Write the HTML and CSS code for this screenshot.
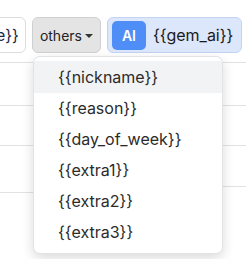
FILE: index.html
```html
<!DOCTYPE html>
<html lang="en">
<head>
    <meta charset="UTF-8">
    <meta name="viewport" content="width=device-width, initial-scale=1.0">
    <title>Variables</title>
    <link rel="stylesheet" href="styles.css">
</head>
<body>
    <div class="editor">
        <div class="toolbar">
            <button class="var-btn">{{name}}</button>
            <button class="others-btn">others <span class="caret"></span></button>
            <button class="ai-btn"><span class="ai-badge">AI</span>{{gem_ai}}</button>
        </div>

        <div class="rows">
            <div class="col col-left">
                <div class="row r1"></div>
                <div class="row r2"></div>
                <div class="row r3"></div>
                <div class="row r4"></div>
            </div>
            <div class="col col-right">
                <div class="row r1"></div>
                <div class="row r2"></div>
                <div class="row r3"></div>
                <div class="row r4b"></div>
            </div>
        </div>

        <ul class="dropdown">
            <li class="item active">{{nickname}}</li>
            <li class="item">{{reason}}</li>
            <li class="item">{{day_of_week}}</li>
            <li class="item">{{extra1}}</li>
            <li class="item">{{extra2}}</li>
            <li class="item">{{extra3}}</li>
        </ul>
    </div>
</body>
</html>
```

FILE: styles.css
```css
body {
    margin: 0;
    padding: 0;
    background: #fff;
    font-family: Inter, "Noto Sans", sans-serif;
    color: #222;
    overflow: hidden;
}

.editor {
    position: relative;
    width: 246px;
    height: 259px;
}

.toolbar {
    display: flex;
    align-items: center;
    gap: 6px;
    padding-top: 17px;
    margin-left: -59px;
}

.toolbar button {
    font-family: inherit;
    height: 36px;
    border-radius: 6px;
    box-sizing: border-box;
    cursor: pointer;
    white-space: nowrap;
}

.var-btn {
    background: #fff;
    border: 1px solid #dcdcdc;
    color: #1b2a4a;
    font-size: 16px;
    padding: 0 6px 0 8px;
}

.others-btn {
    background: #e4e4e4;
    border: 1px solid #d0d0d0;
    color: #222;
    font-size: 14px;
    padding: 0 7px;
    display: flex;
    align-items: center;
    gap: 3px;
}

.caret {
    width: 0;
    height: 0;
    border-left: 4px solid transparent;
    border-right: 4px solid transparent;
    border-top: 4px solid #333;
    margin-top: 2px;
}

.ai-btn {
    background: #dde7fb;
    border: 1px solid #c3d4f3;
    color: #1a1a1a;
    font-size: 16px;
    padding: 0 8px 0 4px;
    display: flex;
    align-items: center;
    gap: 7px;
}

.ai-badge {
    background: #4f8ef7;
    color: #fff;
    font-size: 14px;
    font-weight: 600;
    border-radius: 5px;
    width: 34px;
    height: 29px;
    display: flex;
    align-items: center;
    justify-content: center;
}

.rows {
    display: flex;
    justify-content: space-between;
}

.col {
    width: 40px;
}

.row {
    border-bottom: 1px solid #e2e2e2;
    box-sizing: border-box;
}

.r1 { height: 10px; }
.r2 { height: 43px; }
.r3 { height: 40px; }
.r4 { height: 47px; }
.r4b { height: 41px; }

.dropdown {
    position: absolute;
    left: 33px;
    top: 56px;
    width: 190px;
    margin: 0;
    padding: 4px 0 5px;
    list-style: none;
    background: #fff;
    border: 1px solid #e3e3e3;
    border-radius: 7px;
    box-shadow: 0 4px 12px rgba(0, 0, 0, 0.15);
    box-sizing: border-box;
}

.item {
    height: 31px;
    line-height: 31px;
    padding-left: 24px;
    font-size: 16px;
    color: #2b2b2b;
}

.item.active {
    background: #f2f3f5;
    height: 32px;
    line-height: 32px;
}
```
